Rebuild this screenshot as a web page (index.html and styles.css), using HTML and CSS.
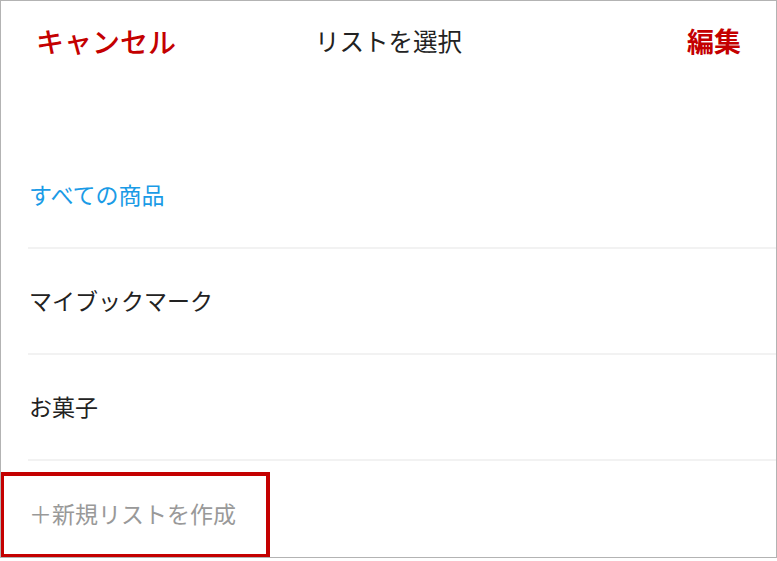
FILE: index.html
```html
<!DOCTYPE html>
<html lang="ja">
<head>
  <meta charset="UTF-8" />
  <meta name="viewport" content="width=device-width, initial-scale=1.0"/>
  <title>リストを選択</title>
  <link rel="stylesheet" href="styles.css">
</head>
<body>
  <div class="frame">
    <div class="header">
      <span class="btn left">キャンセル</span>
      <span class="title">リストを選択</span>
      <span class="btn right">編集</span>
    </div>
    <ul class="lists">
      <li class="item active">すべての商品</li>
      <li class="item">マイブックマーク</li>
      <li class="item">お菓子</li>
      <li class="item add">＋新規リストを作成<span class="mark"></span></li>
    </ul>
  </div>
</body>
</html>
```

FILE: styles.css
```css
body { margin: 0; background: #fff; font-family: "Noto Sans CJK JP", "Noto Sans", sans-serif; }
.frame { position: relative; width: 777px; height: 558px; box-sizing: border-box; border: 1px solid #b3b3b3; overflow: hidden; background: #fff; }
.header { display: grid; grid-template-columns: 1fr auto 1fr; align-items: center; height: 79px; padding: 0 35px 0 35px; }
.btn { color: #c40000; font-size: 28px; font-weight: 500; }
.btn.right { justify-self: end; font-weight: bold; font-size: 27px; }
.title { color: #222; font-size: 24.5px; }
.lists { list-style: none; margin: 63px 0 0 27px; padding: 0; }
.item { position: relative; height: 104px; box-sizing: border-box; display: flex; align-items: center; padding: 0 0 3px 1px; border-bottom: 2px solid #f2f2f2; font-size: 23px; color: #222; }
.item { height: 106px; }
.item.active { color: #1a9be6; }
.item.add { color: #999; border-bottom: none; }
.mark { position: absolute; left: -28px; top: 11px; width: 270px; height: 86px; box-sizing: border-box; border: 4px solid #c40000; }
```
